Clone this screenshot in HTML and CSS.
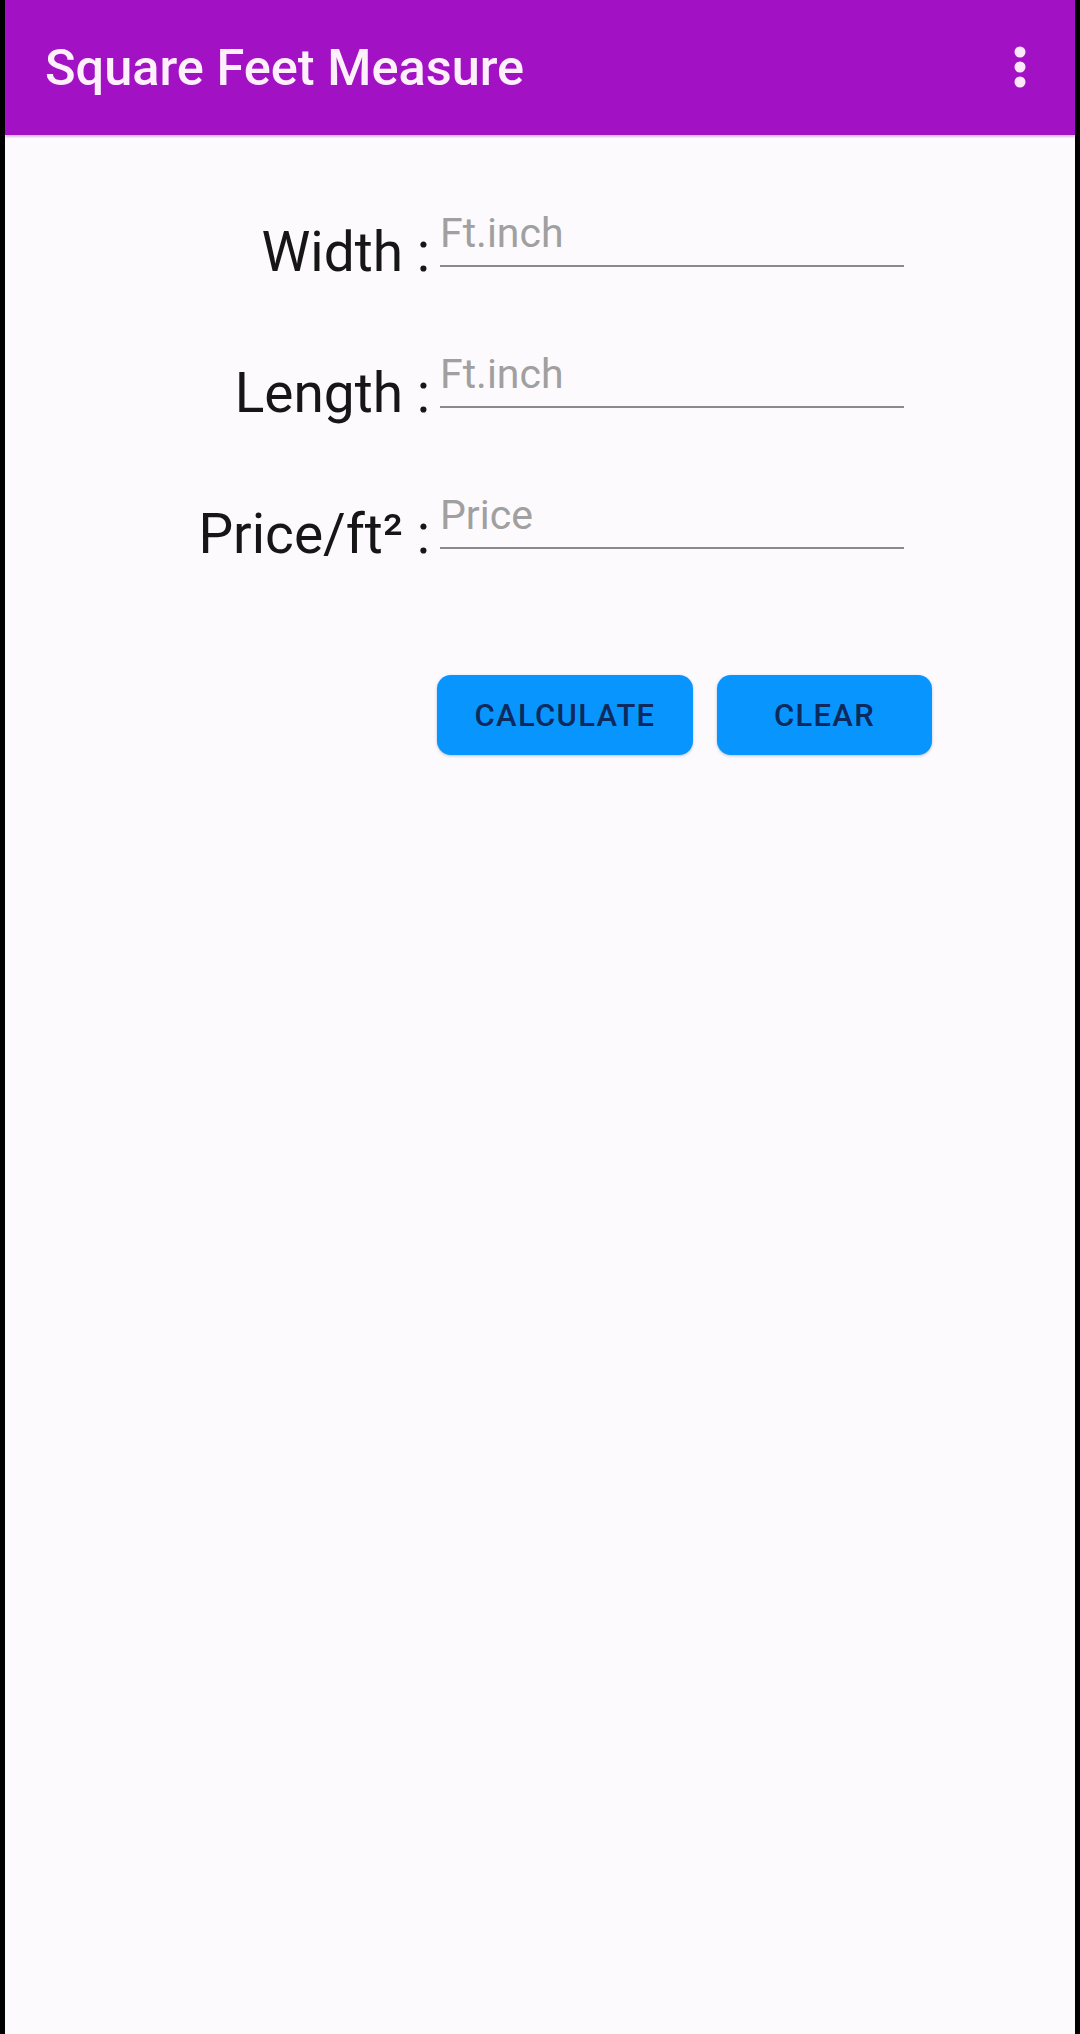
FILE: index.html
```html
<!DOCTYPE html>
<html lang="en">
<head>
    <meta charset="UTF-8">
    <meta name="viewport" content="width=device-width, initial-scale=1.0">
    <title>Square Feet Measure</title>
    <link rel="stylesheet" href="styles.css">
</head>
<body>
<div class="screen">
    <header class="app-bar">
        <h1>Square Feet Measure</h1>
        <button class="menu" type="button" aria-label="More options">
            <svg width="14" height="44" viewBox="0 0 14 44">
                <circle cx="7" cy="7" r="5.5" fill="#fde8fb"/>
                <circle cx="7" cy="22" r="5.5" fill="#fde8fb"/>
                <circle cx="7" cy="37" r="5.5" fill="#fde8fb"/>
            </svg>
        </button>
    </header>

    <form class="measure-form" id="measureForm">
        <div class="row">
            <label for="width">Width :</label>
            <input type="text" id="width" placeholder="Ft.inch">
        </div>
        <div class="row">
            <label for="length">Length :</label>
            <input type="text" id="length" placeholder="Ft.inch">
        </div>
        <div class="row">
            <label for="price">Price/ft² :</label>
            <input type="text" id="price" placeholder="Price">
        </div>
        <div class="actions">
            <button type="submit" class="btn btn-calc">CALCULATE</button>
            <button type="reset" class="btn btn-clear">CLEAR</button>
        </div>
    </form>
</div>
</body>
</html>
```

FILE: styles.css
```css
body {
    margin: 0;
    background-color: #000;
    font-family: Roboto, "Noto Sans", Arial, sans-serif;
}
.screen {
    margin: 0 5px;
    min-height: 2034px;
    background-color: #fdfafd;
}
.app-bar {
    height: 135px;
    background-color: #a211c3;
    display: flex;
    align-items: center;
    justify-content: space-between;
    padding: 0 48px 0 40px;
    box-sizing: border-box;
    box-shadow: 0 2px 2px rgba(90, 0, 110, 0.25);
}
.app-bar h1 {
    margin: 0;
    font-size: 50.5px;
    font-weight: 500;
    color: #fdf0fb;
    line-height: 1;
    margin-top: 2px;
}
.menu {
    border: none;
    background: none;
    padding: 0;
    display: flex;
    margin-top: -1px;
}
.measure-form {
    padding-top: 85px;
    display: flex;
    flex-direction: column;
    gap: 77px;
}
.row {
    display: flex;
    align-items: flex-end;
}
.row label {
    width: 425px;
    text-align: right;
    font-size: 55px;
    line-height: 64px;
    color: #161616;
}
.row input {
    margin: -11px 0 17px 10px;
    width: 464px;
    height: 48px;
    padding: 0 0 8px 0;
    border: none;
    border-bottom: 2px solid #8a8a8a;
    background: transparent;
    font-family: Roboto, "Noto Sans", Arial, sans-serif;
    font-size: 41px;
    color: #222;
    outline: none;
}
.row input::placeholder {
    color: #a0a0a0;
}
.actions {
    display: flex;
    gap: 24px;
    padding-left: 432px;
    margin-top: 32px;
}
.btn {
    height: 80px;
    border: none;
    border-radius: 14px;
    background-color: #0995fe;
    color: #0d2a5c;
    font-family: Roboto, "Noto Sans", Arial, sans-serif;
    font-size: 31px;
    font-weight: 500;
    letter-spacing: 1.3px;
    box-shadow: 0 1px 3px rgba(0, 60, 140, 0.3);
    cursor: pointer;
}
.btn-calc {
    width: 256px;
}
.btn-clear {
    width: 215px;
}
```
